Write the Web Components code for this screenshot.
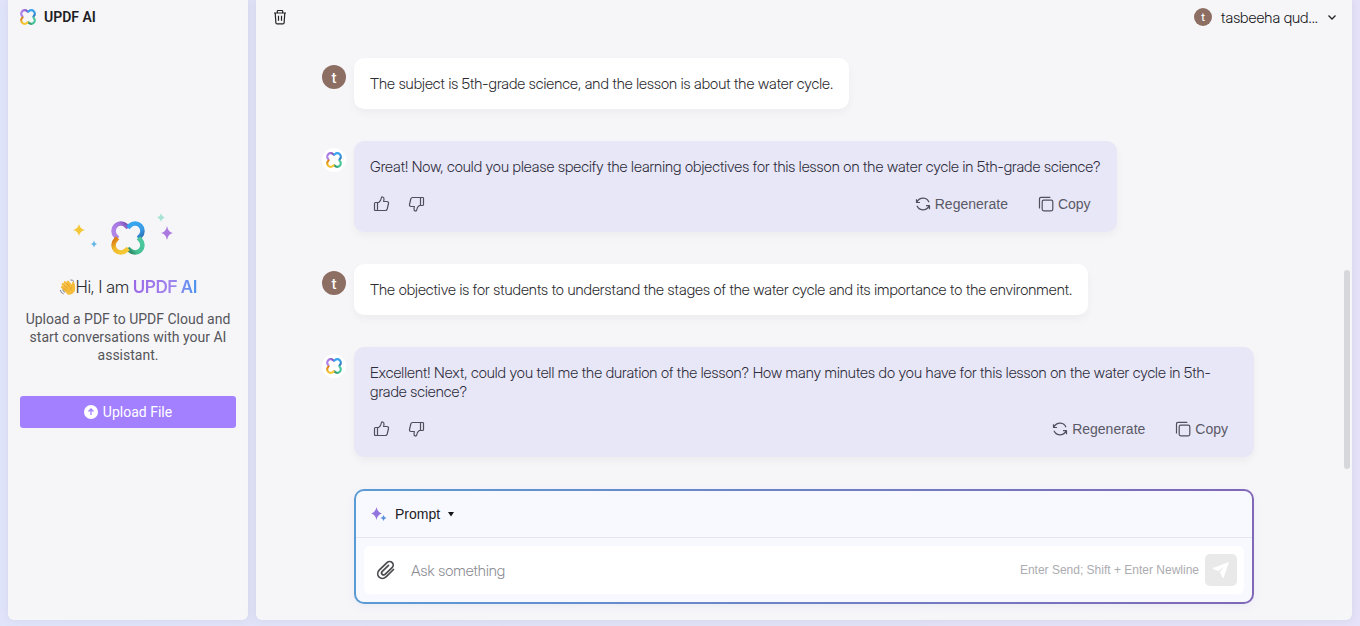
<!DOCTYPE html>
<html lang="en">
<head>
<meta charset="utf-8">
<meta name="viewport" content="width=device-width, initial-scale=1">
<title>UPDF AI</title>
<style>
  body { margin: 0; font-family: "Inter Display", Inter, "Liberation Sans", sans-serif; font-size: 15px; font-weight: 350; color: #333338; }
</style>
</head>
<body>
<ai-app>
  <side-panel slot="side"></side-panel>
  <top-bar slot="main" user="tasbeeha qud..."></top-bar>
  <chat-log slot="main">
    <chat-message from="user">The subject is 5th-grade science, and the lesson is about the water cycle.</chat-message>
    <chat-message from="ai">Great! Now, could you please specify the learning objectives for this lesson on the water cycle in 5th-grade science?</chat-message>
    <chat-message from="user">The objective is for students to understand the stages of the water cycle and its importance to the environment.</chat-message>
    <chat-message from="ai">Excellent! Next, could you tell me the duration of the lesson? How many minutes do you have for this lesson on the water cycle in 5th-grade science?</chat-message>
    <prompt-box></prompt-box>
  </chat-log>
</ai-app>

<script>
const define = (name, html, setup) => {
  const template = document.createElement('template');
  template.innerHTML = html;
  customElements.define(name, class extends HTMLElement {
    connectedCallback() {
      if (this.shadowRoot) return;
      this.attachShadow({ mode: 'open' }).append(template.content.cloneNode(true));
      if (setup) setup(this, this.shadowRoot);
    }
  });
};

const buttonReset = `button { font: inherit; color: inherit; background: none; border: 0; margin: 0; padding: 0; display: flex; align-items: center; cursor: pointer; } svg { display: block; flex: none; }`;

define('updf-logo', `
<style>
  :host { display: block; width: 16px; height: 16px; }
  svg { display: block; width: 100%; height: 100%; }
</style>
<svg viewBox="-17 -17 34 34" fill="none" stroke-width="4.600" role="img" aria-label="UPDF AI">
  <defs>
    <linearGradient id="p" gradientUnits="userSpaceOnUse" x1="-12" y1="-4" x2="0" y2="-13"><stop stop-color="#b184ea"/><stop offset=".6" stop-color="#a475df"/><stop offset="1" stop-color="#7850b0"/></linearGradient>
    <linearGradient id="b" gradientUnits="userSpaceOnUse" x1="3" y1="-12" x2="12" y2="0"><stop stop-color="#38a5ef"/><stop offset=".6" stop-color="#3b9ce6"/><stop offset="1" stop-color="#2d72b8"/></linearGradient>
    <linearGradient id="g" gradientUnits="userSpaceOnUse" x1="12" y1="3" x2="0" y2="13"><stop stop-color="#4cc79c"/><stop offset=".6" stop-color="#43bf92"/><stop offset="1" stop-color="#288160"/></linearGradient>
    <linearGradient id="y" gradientUnits="userSpaceOnUse" x1="-2" y1="13" x2="-12" y2="1"><stop stop-color="#f5c936"/><stop offset=".6" stop-color="#f0b92b"/><stop offset="1" stop-color="#dc8117"/></linearGradient>
  </defs>
  <path stroke="url(#p)" d="M-10.500 .3L-12.300-1.900A7 7 0 1 1-1.900-12.300L.3-10.500"/>
  <path stroke="url(#b)" d="M-.3-10.500L1.900-12.300A7 7 0 1 1 12.300-1.900L10.500 .3"/>
  <path stroke="url(#g)" d="M10.500-.3L12.300 1.900A7 7 0 1 1 1.900 12.300L-.3 10.500"/>
  <path stroke="url(#y)" d="M.3 10.500L-1.900 12.300A7 7 0 1 1-12.300 1.900L-10.500-.3"/>
</svg>`);

define('ai-app', `
<style>
  :host { display: flex; gap: 8px; box-sizing: border-box; min-height: 100vh; padding: 0 8px 7px;
    background: linear-gradient(90deg, #e1e4fb, #e2e2f6 50%, #e6e2f9); }
  aside, main { background: #f6f6f9; border-radius: 0 0 6px 6px; box-shadow: 0 0 8px #c9cce0a0; }
  aside { flex: 0 0 240px; display: flex; }
  main { flex: 1; min-width: 0; position: relative; display: flex; flex-direction: column; }
  .thumb { position: absolute; right: 2px; top: 270px; width: 6px; height: 199px; border-radius: 3px; background: #d5d7db; }
</style>
<aside><slot name="side"></slot></aside>
<main><slot name="main"></slot><div class="thumb"></div></main>`);

define('side-panel', `
<style>
  ${buttonReset}
  :host { flex: 1; display: flex; flex-direction: column; padding: 0 12px; }
  header, p, button { font-family: Roboto, "Liberation Sans", sans-serif; font-size: 14px; font-weight: 400; }
  header { display: flex; align-items: center; gap: 8px; height: 34px; color: #202024; font-weight: 600; }
  section { text-align: center; padding-top: 176px; }
  .art { display: flex; justify-content: center; height: 50px; }
  h1 { display: flex; justify-content: center; align-items: center; margin: 16px 0 12px; font-size: 17px; line-height: 22px; font-weight: 300; color: #2c2c30; white-space: pre; }
  b { font-weight: 600; color: transparent; background: linear-gradient(90deg, #9a68e6, #a184ef 60%, #4b94ee); background-clip: text; -webkit-background-clip: text; }
  p { margin: 0 0 32px; line-height: 18px; color: #55555a; }
  button { width: 100%; height: 32px; justify-content: center; gap: 5px; border-radius: 3px; background: #a380ff; color: #fff; }
</style>
<header><updf-logo></updf-logo>UPDF AI</header>
<section>
  <div class="art">
    <svg width="110" height="50" viewBox="0 0 110 50">
      <path fill="#f3c735" d="M6 14Q7 19 12 20Q7 21 6 26Q5 21 0 20Q5 19 6 14Z"/>
      <path fill="#65b6e4" d="M21 30.500Q21.500 33.500 24 34Q21.500 34.500 21 37.500Q20.500 34.500 18 34Q20.500 33.500 21 30.500Z"/>
      <path fill="#a9e3d5" d="M88 3Q88.700 6.500 92 7.500Q88.700 8.500 88 12Q87.300 8.500 84 7.500Q87.300 6.500 88 3Z"/>
      <path fill="#ab78df" d="M94 16Q95 22 100 23Q95 24 94 30Q93 24 88 23Q93 22 94 16Z"/>
      <foreignObject x="38" y="11" width="34" height="34"><updf-logo style="width:34px;height:34px"></updf-logo></foreignObject>
    </svg>
  </div>
  <h1><svg width="17" height="17" viewBox="0 0 18 18" aria-hidden="true"><g stroke-linecap="round" fill="none"><path stroke="#f6bd3c" stroke-width="2.600" d="M4 5.500L9.500 11M6.200 3.500L11.500 9M9.300 3L13 7.500M3.300 8.500L8 13M14.800 4.500Q16 6 15 9"/><path fill="#f6bd3c" stroke="#f6bd3c" stroke-width="2" d="M6 10L12 6L14 8L15 5Q17 9 15.500 13Q13 16.500 9.500 15.500Z"/><path stroke="#d98e22" stroke-width=".7" d="M5.500 6.500L9 10M8 5L11 8M5 9.500L8 12.500M13 8.500Q12 9.500 12.500 11.500"/><path stroke="#77777d" d="M1.500 12Q2 15 4.500 15.700M4 11.500Q4.300 13.500 6 14M12.500 1Q15 1 15.800 2.500"/></g></svg>Hi, I am <b>UPDF AI</b></h1>
  <p>Upload a PDF to UPDF Cloud and start conversations with your AI assistant.</p>
  <button type="button"><svg width="14" height="14" viewBox="0 0 14 14"><circle cx="7" cy="7" r="7" fill="#fff"/><path d="M7 10V4.500M4.500 6.500L7 4L9.500 6.500" fill="none" stroke="#a380ff" stroke-width="1.300"/></svg>Upload File</button>
</section>`);

define('user-avatar', `
<style>
  :host { display: grid; place-items: center; width: 24px; height: 24px; border-radius: 50%; background: #8d6e63; color: #fff; font-weight: 500; }
</style><slot></slot>`);

define('top-bar', `
<style>
  ${buttonReset}
  :host { display: flex; justify-content: space-between; align-items: center; height: 34px; padding: 0 14px 0 16px; color: #151518; }
  user-avatar { width: 18px; height: 18px; font-size: 11px; margin-right: 9px; }
  .chev { margin-left: 8px; }
</style>
<button type="button" aria-label="Delete conversation"><svg width="16" height="16" viewBox="0 0 16 16" fill="none" stroke="#222226" stroke-width="1.200"><path d="M2 4H14M5.300 4V2.200Q5.300 1.500 6 1.500H10Q10.700 1.500 10.700 2.200V4M3.200 4L3.900 14Q4 14.900 5 14.900H11Q12 14.900 12.100 14L12.800 4M6.500 6.700V11.800M9.500 6.700V11.800"/></svg></button>
<button type="button" aria-haspopup="menu"><user-avatar>t</user-avatar><span></span><svg class="chev" width="12" height="12" viewBox="0 0 12 12"><path d="M2.500 4.500L6 8L9.500 4.500" fill="none" stroke="#222226" stroke-width="1.300"/></svg></button>`,
(host, root) => { root.querySelector('span').textContent = host.getAttribute('user'); });

define('chat-log', `
<style>
  :host { display: flex; flex-direction: column; gap: 32px; box-sizing: border-box; width: 100%; max-width: 964px; margin: 0 auto; padding: 24px 0 16px; }
</style><slot></slot>`);

define('chat-message', `
<style>
  ${buttonReset}
  :host { display: grid; grid-template-columns: 24px minmax(0, 1fr); gap: 8px; padding-right: 32px; }
  .who { margin-top: 7px; }
  .ai-mark { display: grid; place-items: center; width: 24px; height: 24px; border-radius: 50%; background: #fff; }
  .bubble { justify-self: start; border-radius: 10px; padding: 16px; line-height: 19px; background: #fff; box-shadow: 0 4px 8px #0000000a; color: #2c2c30; }
  .ai { background: #e8e7f7; color: #2e2d3b; padding-bottom: 14px; }
  .actions { display: flex; align-items: center; height: 28px; margin-top: 14px; padding: 0 10px 0 3px; color: #5a5966; font-family: "Liberation Sans", Arial, sans-serif; font-size: 14px; font-weight: 400; }
  .actions button { gap: 4px; }
  .down { margin-left: 18px; }
  .regen { margin-left: auto; }
  .copy { margin-left: 30px; }
  svg { fill: none; stroke: #514f5e; stroke-width: 1.200; stroke-linejoin: round; }
</style>
<div class="who"></div>
<article class="bubble"><slot></slot></article>`,
(host, root) => {
  const who = root.querySelector('.who');
  if (host.getAttribute('from') === 'user') {
    who.innerHTML = '<user-avatar>t</user-avatar>';
    return;
  }
  who.innerHTML = '<div class="ai-mark"><updf-logo></updf-logo></div>';
  const thumb = '<path d="M1 7.500Q1 6.500 2 6.500H4V14.500H2Q1 14.500 1 13.500ZM4 6.500H5.200Q7.500 5 7.900 1.800Q8.200 .8 9.200 1Q10.700 1.400 10.500 3.500L10.100 5.500H13.500Q15.300 5.700 15 7.500L13.700 13Q13.300 14.500 12 14.500H4"/>';
  const bubble = root.querySelector('.bubble');
  bubble.classList.add('ai');
  bubble.insertAdjacentHTML('beforeend', `<div class="actions">
    <button type="button" aria-label="Good response"><svg width="17" height="16" viewBox="0 0 16 16">${thumb}</svg></button>
    <button type="button" class="down" aria-label="Bad response"><svg width="17" height="16" viewBox="0 0 16 16"><g transform="rotate(180 8 8)">${thumb}</g></svg></button>
    <button type="button" class="regen"><svg width="16" height="16" viewBox="0 0 16 16"><path d="M1.500 3.200V6.500H5M1.700 6.300Q4 2 8.500 2.200Q12.500 2.500 14 6.300M14.500 13.200V9.600H11M14.300 9.900Q12 14 7.500 13.900Q3.500 13.500 2 9.800"/></svg>Regenerate</button>
    <button type="button" class="copy"><svg width="16" height="16" viewBox="0 0 16 16"><rect x="4.200" y="4.200" width="10.600" height="10.600" rx="1.500"/><path d="M1.500 12.500V3Q1.500 1.300 3 1.300H12.300"/></svg>Copy</button>
  </div>`);
});

define('prompt-box', `
<style>
  ${buttonReset}
  :host { display: block; margin: 0 32px; border: 2px solid transparent; border-radius: 10px;
    background: linear-gradient(#f8f9fe, #f8f9fe) padding-box, linear-gradient(90deg, #5b9bd5, #8167b8) border-box;
    box-shadow: 0 3px 8px #7080c014; }
  header { display: flex; align-items: center; height: 46px; padding: 0 14px; border-bottom: 1px solid #e2e7f2; }
  header button { color: #222226; gap: 8px; font-family: "Liberation Sans", Arial, sans-serif; font-size: 14px; font-weight: 400; }
  form { display: flex; align-items: center; height: 48px; margin: 8px; padding: 0 7px 0 12px; border-radius: 6px; background: #fff; }
  input { flex: 1; min-width: 0; font: inherit; font-weight: 300; color: #333338; border: 0; outline: 0; padding: 0; margin-left: 15px; background: none; }
  input::placeholder { color: #8c8c92; opacity: 1; }
  .hint { font: 400 12px "Liberation Sans", Arial, sans-serif; color: #acacb0; margin-right: 6px; }
  .send { width: 32px; height: 32px; justify-content: center; border-radius: 5px; background: #e9e9ea; }
</style>
<header><button type="button" aria-haspopup="menu"><svg width="17" height="16" viewBox="0 0 17 16"><path fill="#9375e0" d="M6.500 1Q7.500 6.300 12 7.500Q7.500 8.700 6.500 14Q5.500 8.700 1 7.500Q5.500 6.300 6.500 1Z"/><path fill="#5b8fd8" d="M13.500 9Q14 11.500 16.500 12Q14 12.500 13.500 15Q13 12.500 10.500 12Q13 11.500 13.500 9Z"/></svg>Prompt<svg width="6" height="8" viewBox="1 0 6 8"><path fill="#151518" d="M1 2H7L4 6.500Z"/></svg></button></header>
<form>
  <button type="button" aria-label="Attach file"><svg width="20" height="22" viewBox="0 0 20 22" fill="none" stroke="#4a4a4f" stroke-width="1.700" stroke-linecap="round"><path d="M17.500 10.500L10.300 17.700C8.300 19.700 5.200 20 3.200 18.200C1.200 16.200 1.300 13.200 3.200 11.200L11 3.600C12.500 2.200 14.800 2.200 16.200 3.600C17.600 5 17.500 7.200 16.100 8.600L9.300 15.200C8.400 16.100 7 16.100 6.200 15.300C5.400 14.500 5.400 13.200 6.300 12.300L12.500 6.300"/></svg></button>
  <input type="text" aria-label="Message" placeholder="Ask something">
  <span class="hint">Enter Send; Shift + Enter Newline</span>
  <button type="button" class="send" aria-label="Send"><svg width="18" height="18" viewBox="0 0 18 18"><path fill="#fff" d="M17 1L1 7Q.5 8 1.500 8.300L6.500 10L12 5.500L8 11.200L10.300 16.500Q11.200 17.500 11.800 16.300Z"/></svg></button>
</form>`);
</script>
</body>
</html>
